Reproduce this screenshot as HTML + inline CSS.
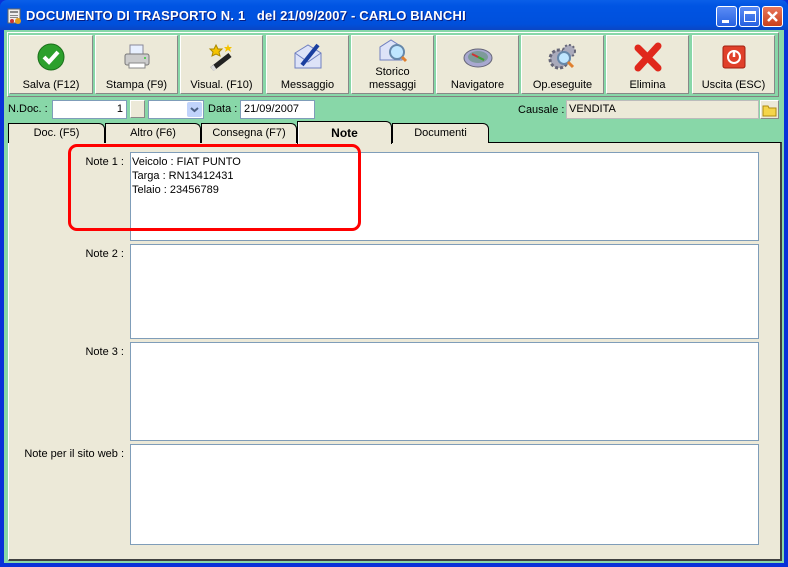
<!DOCTYPE html>
<html><head><style>
*{margin:0;padding:0;box-sizing:border-box}
body{width:788px;height:567px;overflow:hidden;font-family:"Liberation Sans",sans-serif;font-size:11px;color:#000;background:#0831d9;position:relative}
.a{position:absolute}
.title{left:0;top:0;width:788px;height:30px;background:linear-gradient(#0a5fe8,#0054e3 20%,#0050dc 80%,#0a46c4);border-radius:7px 7px 0 0}
.tt{left:26px;top:8px;color:#fff;font-weight:bold;font-size:13px;text-shadow:1px 1px #0a1e80;letter-spacing:0.2px}
.wb{top:6px;width:21px;height:21px;border:1px solid #fff;border-radius:3px;background:linear-gradient(#5b8cf5,#2661e0)}
.client{left:4px;top:30px;width:780px;height:533px;background:#88d7a8}
.tb{left:7px;top:32px;width:772px;height:65px;border:1px solid #fff;border-right-color:#808080;border-bottom-color:#808080}
.btn{top:35px;height:59px;background:#ece9d8;border:1px solid #fff;border-right-color:#888;border-bottom-color:#888;text-align:center;font-size:11px}
.btn span{position:absolute;left:0;right:0;bottom:1px;line-height:13px}
.btn svg{position:absolute;left:50%;top:5px;margin-left:-16px}
.inp{background:#fff;border:1px solid #7f9db9;height:19px;line-height:17px;padding:0 3px}
.tab{top:123px;height:20px;background:#ece9d8;border:1px solid #000;border-bottom:none;border-radius:0 6px 0 0;text-align:center;line-height:18px}
.panel{left:8px;top:142px;width:774px;height:419px;background:#ece9d8;border-top:1px solid #000;border-right:2px solid #404040;border-bottom:2px solid #404040;border-left:1px solid #fff}
.note{left:130px;width:629px;background:#fff;border:1px solid #7f9db9}
.lbl{width:120px;left:4px;text-align:right}
</style></head><body>
<div class="a title"></div>
<svg class="a" style="left:7px;top:8px" width="16" height="16"><rect x="1" y="1" width="12" height="14" fill="#eee" stroke="#666"/><rect x="3" y="3" width="8" height="2" fill="#888"/><rect x="3" y="7" width="8" height="1" fill="#888"/><rect x="3" y="9" width="8" height="1" fill="#888"/><circle cx="11" cy="13" r="3" fill="#e0a020"/><circle cx="5" cy="13" r="2" fill="#c33"/></svg>
<div class="a tt">DOCUMENTO DI TRASPORTO N. 1&nbsp;&nbsp; del 21/09/2007 - CARLO BIANCHI</div>
<div class="a wb" style="left:716px"><div class="a" style="left:5px;top:13px;width:7px;height:3px;background:#fff"></div></div>
<div class="a wb" style="left:739px"><div class="a" style="left:4px;top:4px;width:12px;height:11px;border:1px solid #fff;border-top-width:3px"></div></div>
<div class="a wb" style="left:762px;background:linear-gradient(#e9775a,#c8401c)"><svg width="19" height="19"><path d="M5 5L14 14M14 5L5 14" stroke="#fff" stroke-width="2.5"/></svg></div>
<div class="a client"></div>
<div class="a tb"></div>

<div class="a btn" style="left:9px;width:84px"><svg width="32" height="32"><circle cx="16" cy="16" r="13" fill="#2ca02c" stroke="#1a6e1a"/><path d="M9 16l5 5 9-10" stroke="#fff" stroke-width="4" fill="none"/></svg><span>Salva (F12)</span></div>
<div class="a btn" style="left:95px;width:83px"><svg width="32" height="32"><rect x="9" y="4" width="13" height="10" fill="#e8f0ff" stroke="#889"/><rect x="4" y="13" width="24" height="11" rx="2" fill="#ccc" stroke="#777"/><rect x="8" y="22" width="16" height="5" fill="#fff" stroke="#888"/><circle cx="24" cy="17" r="1" fill="#3c3"/></svg><span>Stampa (F9)</span></div>
<div class="a btn" style="left:180px;width:83px"><svg width="32" height="32"><path d="M6 28L24 14" stroke="#222" stroke-width="5"/><path d="M6 28l3-2" stroke="#ddd" stroke-width="5"/><path d="M10 4l2 4 4 0-3 3 1 4-4-2-4 2 1-4-3-3 4 0z" fill="#f5c400" stroke="#a80"/><path d="M22 3l1 3 3 0-2 2 1 3-3-2-3 2 1-3-2-2 3 0z" fill="#f5c400"/></svg><span>Visual. (F10)</span></div>
<div class="a btn" style="left:266px;width:83px"><svg width="32" height="32"><path d="M3 12l13-8 13 8v15H3z" fill="#dde3f8" stroke="#7080c0"/><path d="M3 12l13 9 13-9" fill="none" stroke="#7080c0"/><path d="M10 24L26 4" stroke="#1a3fa0" stroke-width="4"/></svg><span>Messaggio</span></div>
<div class="a btn" style="left:351px;width:83px"><svg width="32" height="32" style="top:1px"><path d="M3 10l11-7 11 7v13H3z" fill="#dde3f8" stroke="#7080c0"/><circle cx="20" cy="15" r="7" fill="#bfe6ff" stroke="#6688aa" stroke-width="2"/><path d="M25 20l4 4" stroke="#e08030" stroke-width="3"/></svg><span>Storico<br>messaggi</span></div>
<div class="a btn" style="left:436px;width:83px"><svg width="32" height="32"><ellipse cx="16" cy="17" rx="14" ry="9" fill="#a8a8d0" stroke="#667"/><ellipse cx="16" cy="16" rx="10" ry="6" fill="#7d9a9a"/><path d="M10 13l12 6" stroke="#c33" stroke-width="2"/><path d="M16 16l6 3" stroke="#3a3" stroke-width="2"/></svg><span>Navigatore</span></div>
<div class="a btn" style="left:521px;width:83px"><svg width="32" height="32"><circle cx="12" cy="18" r="9" fill="#aab" stroke="#667" stroke-width="3" stroke-dasharray="3 2"/><circle cx="22" cy="10" r="6" fill="#aab" stroke="#667" stroke-width="2" stroke-dasharray="2 2"/><circle cx="17" cy="17" r="6" fill="#bfe6ff" stroke="#6688aa" stroke-width="2"/><path d="M21 21l5 5" stroke="#e08030" stroke-width="3"/></svg><span>Op.eseguite</span></div>
<div class="a btn" style="left:606px;width:83px"><svg width="32" height="32"><path d="M6 7L26 27M26 5L6 27" stroke="#e0281c" stroke-width="7" stroke-linecap="round"/></svg><span>Elimina</span></div>
<div class="a btn" style="left:692px;width:83px"><svg width="32" height="32"><rect x="5" y="5" width="22" height="22" rx="2" fill="#e0402a" stroke="#a02010"/><circle cx="16" cy="16" r="6" fill="none" stroke="#fff" stroke-width="2"/><path d="M16 9v7" stroke="#fff" stroke-width="2.5"/></svg><span>Uscita (ESC)</span></div>

<div class="a" style="left:8px;top:103px">N.Doc. :</div>
<div class="a inp" style="left:52px;top:100px;width:75px;text-align:right">1</div>
<div class="a" style="left:130px;top:100px;width:15px;height:18px;background:#ece9d8;border:1px solid #fff;border-right-color:#888;border-bottom-color:#888"></div>
<div class="a inp" style="left:148px;top:100px;width:56px"></div>
<div class="a" style="left:187px;top:102px;width:15px;height:15px;background:#c1d3fb;border-radius:2px"><svg width="15" height="15"><path d="M4 6l3.5 3 3.5-3" stroke="#4d6185" stroke-width="2" fill="none"/></svg></div>
<div class="a" style="left:208px;top:103px">Data :</div>
<div class="a inp" style="left:240px;top:100px;width:75px">21/09/2007</div>
<div class="a" style="left:518px;top:104px">Causale :</div>
<div class="a" style="left:566px;top:100px;width:193px;height:19px;background:#ece9d8;border:1px solid #bbb;line-height:17px;padding-left:2px">VENDITA</div>
<div class="a" style="left:760px;top:100px;width:19px;height:19px;background:#ece9d8;border:1px solid #fff;border-right-color:#888;border-bottom-color:#888"><svg width="17" height="17"><path d="M2 5h5l1 2h7v8H2z" fill="#f5d54a" stroke="#b08a10"/></svg></div>

<div class="a panel"></div>
<div class="a tab" style="left:8px;width:97px">Doc. (F5)</div>
<div class="a tab" style="left:105px;width:96px">Altro (F6)</div>
<div class="a tab" style="left:201px;width:96px">Consegna (F7)</div>
<div class="a tab" style="left:392px;width:97px">Documenti</div>
<div class="a tab" style="left:297px;top:121px;height:23px;width:95px;font-weight:bold;font-size:12px;line-height:22px;border-bottom:none;background:#ece9d8;box-shadow:inset 1px 0 #fff">Note</div>

<div class="a lbl" style="top:156px">Note 1 :</div>
<div class="a note" style="top:152px;height:89px;padding:2px 1px;line-height:14px">Veicolo : FIAT PUNTO<br>Targa : RN13412431<br>Telaio : 23456789</div>
<div class="a lbl" style="top:248px">Note 2 :</div>
<div class="a note" style="top:244px;height:95px"></div>
<div class="a lbl" style="top:346px">Note 3 :</div>
<div class="a note" style="top:342px;height:99px"></div>
<div class="a lbl" style="top:448px">Note per il sito web :</div>
<div class="a note" style="top:444px;height:101px"></div>

<div class="a" style="left:68px;top:144px;width:293px;height:87px;border:3px solid #f00;border-radius:9px"></div>
</body></html>
